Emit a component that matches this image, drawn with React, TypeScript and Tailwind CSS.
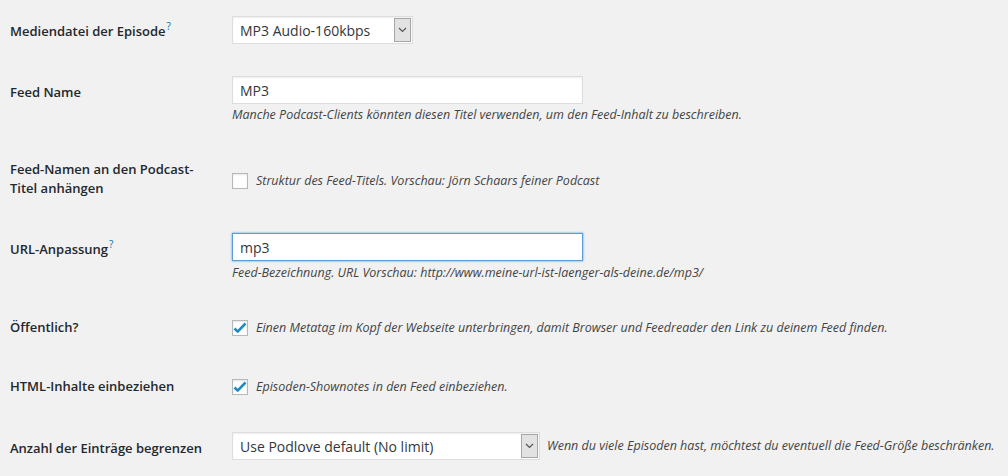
import { ReactNode } from "react";

const labelCls =
  "w-[200px] shrink-0 text-[13px] leading-[19px] font-semibold text-[#23282d]";
const descCls = "text-[12.5px] leading-[18px] italic text-[#444]";

const Help = () => (
  <span className="relative -top-[6px] text-[#0073aa] text-[10px] leading-none font-normal ml-[1px]">
    ?
  </span>
);

const Chevron = () => (
  <svg width="9" height="6" viewBox="0 0 9 6" fill="none">
    <path d="M1 1l3.5 3.5L8 1" stroke="#555" strokeWidth="1.2" />
  </svg>
);

const FakeSelect = ({ value, width }: { value: string; width: string }) => (
  <div
    className={`${width} h-[28px] flex items-stretch bg-white border border-[#ddd] shadow-[inset_0_1px_2px_rgba(0,0,0,0.07)]`}
  >
    <span className="flex-1 flex items-center pl-[7px] text-[14px] text-[#32373c] truncate">
      {value}
    </span>
    <span className="w-[17px] my-[1px] mr-[1px] flex items-center justify-center bg-[#e2e2e2] border border-[#a6a6a6]">
      <Chevron />
    </span>
  </div>
);

const TextInput = ({ value, focused }: { value: string; focused?: boolean }) => (
  <div
    className={
      focused
        ? "w-[351px] h-[28px] flex items-center px-[7px] bg-white border border-[#5b9dd9] shadow-[0_0_2px_rgba(30,140,190,0.8)] text-[14px] text-[#32373c]"
        : "w-[351px] h-[28px] flex items-center px-[7px] bg-white border border-[#ddd] shadow-[inset_0_1px_2px_rgba(0,0,0,0.07)] text-[14px] text-[#32373c]"
    }
  >
    {value}
  </div>
);

const Checkbox = ({ checked }: { checked?: boolean }) => (
  <span className="w-[16px] h-[16px] shrink-0 flex items-center justify-center bg-white border border-[#b4b9be] shadow-[inset_0_1px_2px_rgba(0,0,0,0.1)]">
    {checked && (
      <svg width="14" height="12" viewBox="0 0 14 12">
        <path
          d="M1.5 6.5l3.2 3.2L12.5 1.5"
          fill="none"
          stroke="#1e8cbe"
          strokeWidth="2.6"
          strokeLinejoin="round"
        />
      </svg>
    )}
  </span>
);

const Row = ({
  label,
  className,
  labelClass,
  children,
}: {
  label: ReactNode;
  className: string;
  labelClass?: string;
  children: ReactNode;
}) => (
  <div className={`flex ${className}`}>
    <div className={`${labelCls} ${labelClass ?? ""}`}>{label}</div>
    <div className="ml-[22px] flex flex-col">{children}</div>
  </div>
);

export default function App() {
  return (
    <div
      className="w-[1008px] h-[476px] overflow-hidden bg-[#f1f1f1] pl-[10px] pt-[16px]"
      style={{ fontFamily: '"Open Sans", "Noto Sans", sans-serif' }}
    >
      <Row
        className="items-start"
        labelClass="pt-[6px]"
        label={
          <>
            Mediendatei der Episode
            <Help />
          </>
        }
      >
        <FakeSelect value="MP3 Audio-160kbps" width="w-[181px]" />
      </Row>

      <Row className="items-start mt-[32px]" labelClass="pt-[7px]" label="Feed Name">
        <TextInput value="MP3" />
        <p className={`${descCls} mt-[2px]`}>
          Manche Podcast-Clients könnten diesen Titel verwenden, um den Feed-Inhalt zu beschreiben.
        </p>
      </Row>

      <Row className="items-start mt-[36px]" label="Feed-Namen an den Podcast-Titel anhängen">
        <div className="flex items-center gap-[8px] pt-[12px]">
          <Checkbox />
          <span className={descCls}>
            Struktur des Feed-Titels. Vorschau: Jörn Schaars feiner Podcast
          </span>
        </div>
      </Row>

      <Row
        className="items-start mt-[35px]"
        labelClass="pt-[7px]"
        label={
          <>
            URL-Anpassung
            <Help />
          </>
        }
      >
        <TextInput value="mp3" focused />
        <p className={`${descCls} mt-[3px]`}>
          Feed-Bezeichnung. URL Vorschau: http://www.meine-url-ist-laenger-als-deine.de/mp3/
        </p>
      </Row>

      <Row className="items-center mt-[36px]" label="Öffentlich?">
        <div className="flex items-center gap-[8px]">
          <Checkbox checked />
          <span className={descCls}>
            Einen Metatag im Kopf der Webseite unterbringen, damit Browser und Feedreader den Link zu deinem Feed finden.
          </span>
        </div>
      </Row>

      <Row className="items-center mt-[40px]" label="HTML-Inhalte einbeziehen">
        <div className="flex items-center gap-[8px]">
          <Checkbox checked />
          <span className={descCls}>Episoden-Shownotes in den Feed einbeziehen.</span>
        </div>
      </Row>

      <Row className="items-start mt-[36px]" labelClass="pt-[7px]" label="Anzahl der Einträge begrenzen">
        <div className="flex items-center gap-[7px]">
          <FakeSelect value="Use Podlove default (No limit)" width="w-[308px]" />
          <span className={`${descCls} whitespace-nowrap`}>
            Wenn du viele Episoden hast, möchtest du eventuell die Feed-Größe beschränken.
          </span>
        </div>
      </Row>
    </div>
  );
}
